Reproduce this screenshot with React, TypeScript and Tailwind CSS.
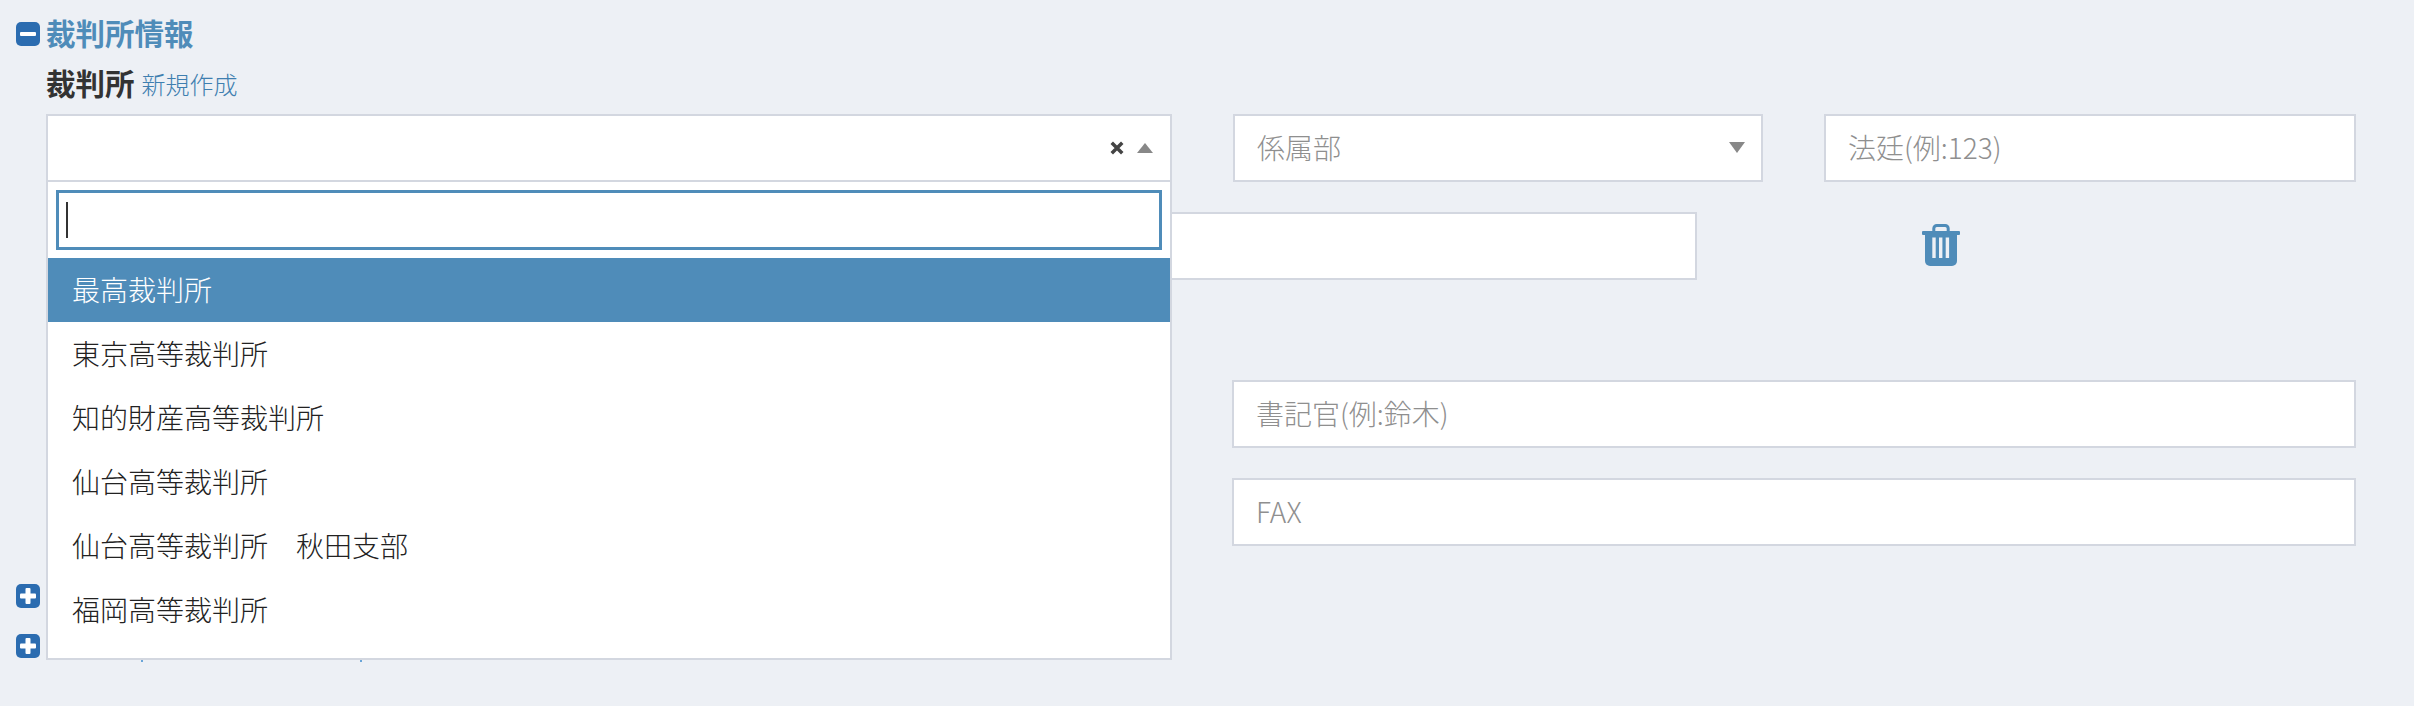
const OPTIONS = [
  '最高裁判所',
  '東京高等裁判所',
  '知的財産高等裁判所',
  '仙台高等裁判所',
  '仙台高等裁判所　秋田支部',
  '福岡高等裁判所',
]

const fieldClass =
  'h-[68px] bg-white border-2 border-[#d3d7e0] pl-[22px] pb-[2px] flex items-center text-[28px] font-light text-[#8f8f8f]'

function ToggleIcon({ plus }: { plus?: boolean }) {
  return (
    <svg viewBox="0 0 24 24" className="w-[24px] h-[24px] shrink-0">
      <rect width="24" height="24" rx="5" fill="#2b6cb0" />
      {plus ? (
        <>
          <rect x="9.5" y="4" width="5" height="16" rx="1" fill="#ffffff" />
          <rect x="4" y="9.5" width="16" height="5" rx="1" fill="#ffffff" />
        </>
      ) : (
        <rect x="4" y="10" width="16" height="4" rx="1" fill="#ffffff" />
      )}
    </svg>
  )
}

function TrashIcon() {
  return (
    <svg viewBox="0 0 38 42" className="w-[38px] h-[42px] shrink-0 ml-[225px] mb-[2px]" fill="#4f8cb9">
      <path d="M11.8 8V4.5a3 3 0 0 1 3-3h8.4a3 3 0 0 1 3 3V8" fill="none" stroke="#4f8cb9" strokeWidth="3" />
      <rect x="0" y="7" width="38" height="4" rx="1" />
      <path d="M3 10h32v27a5 5 0 0 1-5 5H8a5 5 0 0 1-5-5z" />
      <rect x="10.3" y="13.5" width="3.4" height="20.5" fill="#edf0f5" />
      <rect x="17" y="13.5" width="3.4" height="20.5" fill="#edf0f5" />
      <rect x="23.7" y="13.5" width="3.4" height="20.5" fill="#edf0f5" />
    </svg>
  )
}

export default function App() {
  return (
    <div
      className="w-full h-[706px] bg-[#edf0f5] overflow-hidden pt-[18px] pl-[16px]"
      style={{ fontFamily: '"Noto Sans CJK JP", "Noto Sans", sans-serif' }}
    >
      {/* Title */}
      <div className="flex items-center gap-[6px] h-[32px]">
        <ToggleIcon />
        <span className="text-[29.5px] leading-[32px] font-bold text-[#4f8cb9] pb-[5px]">裁判所情報</span>
      </div>

      <div className="relative pl-[30px]">
        {/* Label */}
        <div className="flex items-center gap-[7px] h-[40px] mt-[14px]">
          <span className="text-[29.5px] font-bold text-[#333333] pb-[4px]">裁判所</span>
          <span className="text-[24px] font-light text-[#3f7fb0]">新規作成</span>
        </div>

        {/* Row 1 */}
        <div className="flex gap-[61px] mt-[10px]">
          <div className="w-[1126px] h-[68px] bg-white border-2 border-[#d3d7e0] flex items-center justify-end gap-[13px] pr-[17px]">
            <svg viewBox="0 0 12 12" className="w-[14px] h-[14px]">
              <path d="M1.5 1.5l9 9M10.5 1.5l-9 9" stroke="#444444" strokeWidth="3" />
            </svg>
            <span className="w-0 h-0 border-x-[8px] border-x-transparent border-b-[10px] border-b-[#888888]" />
          </div>
          <div className={`${fieldClass} w-[530px] justify-between pr-[16px]`}>
            係属部
            <span className="w-0 h-0 border-x-[8px] border-x-transparent border-t-[11px] border-t-[#888888]" />
          </div>
          <div className={`${fieldClass} w-[532px]`}>法廷(例:123)</div>
        </div>

        {/* Row 2 */}
        <div className="flex items-center mt-[30px]">
          <div className="w-[1651px] h-[68px] bg-white border-2 border-[#d3d7e0]" />
          <TrashIcon />
        </div>

        {/* Rows 3, 4 */}
        <div className="flex flex-col gap-[30px] mt-[100px] pl-[1186px]">
          <div className={`${fieldClass} w-[1124px]`}>書記官(例:鈴木)</div>
          <div className={`${fieldClass} w-[1124px]`}>FAX</div>
        </div>

        {/* Dropdown panel */}
        <div className="absolute left-[30px] top-[116px] w-[1126px] h-[480px] bg-white border-2 border-[#d3d7e0] overflow-hidden z-10">
          <div className="mx-[8px] mt-[8px] h-[60px] border-[3px] border-[#4f8cb9] flex items-center pl-[7px]">
            <span className="w-[2px] h-[36px] bg-[#333333]" />
          </div>
          <ul className="mt-[8px]">
            {OPTIONS.map((o, i) => (
              <li
                key={o}
                className={`h-[64px] pl-[24px] pb-[2px] flex items-center text-[28px] font-light ${
                  i === 0 ? 'bg-[#4f8cb9] text-white' : 'text-[#222222]'
                }`}
              >
                {o}
              </li>
            ))}
          </ul>
        </div>

        {/* Bits of the text behind the panel */}
        <span className="absolute left-[125px] top-[596px] w-[2px] h-[2px] bg-[#6aa5d8]" />
        <span className="absolute left-[344px] top-[596px] w-[2px] h-[2px] bg-[#6aa5d8]" />
      </div>

      {/* Collapsed sections */}
      <div className="mt-[38px] flex flex-col gap-[26px]">
        <ToggleIcon plus />
        <ToggleIcon plus />
      </div>
    </div>
  )
}
